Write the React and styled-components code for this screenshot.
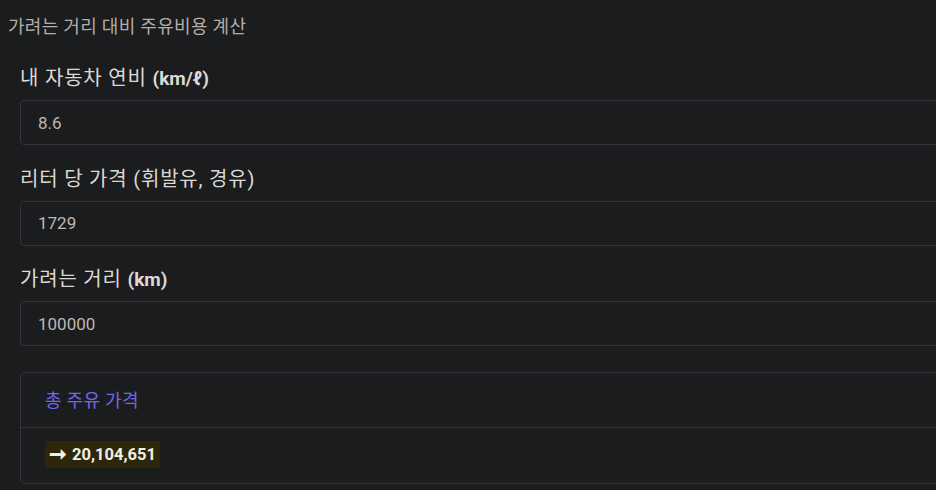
import React from "react";
import styled, { createGlobalStyle } from "styled-components";

const GlobalStyle = createGlobalStyle`
	html {
		background: #1b1c1e;
		overflow: hidden;
	}
	body {
		/* the form runs on past the right edge of the window */
		margin: 8px -200px 8px 8px;
		font-family: Roboto, "Noto Sans CJK KR", sans-serif;
		color: #d6d3cf;
	}
`;

const Title = styled.div`
	font-size: 18px;
	letter-spacing: 0.3px;
	line-height: 24px;
	padding-top: 7px;
	color: #b3ada6;
`;

const Form = styled.div`
	padding: 26px 0 0 12px;
`;

const Field = styled.div`
	display: flex;
	flex-direction: column;
	margin-bottom: 20.5px;
`;

const Label = styled.label`
	font-size: 19px;
	line-height: 27px;
	margin-bottom: 8px;
	color: #dcd9d5;

	b {
		font-weight: 700;
	}
`;

// korean glyphs render wider than the latin ones in this label
const Ko = styled.span`
	font-size: 20px;
	letter-spacing: 0.8px;
`;

const Input = styled.input`
	box-sizing: border-box;
	width: 100%;
	height: 45px;
	padding: 0 17px;
	background: #1b1c1e;
	border: 1px solid #343539;
	border-radius: 4px;
	font-family: Roboto, sans-serif;
	font-size: 17px;
	color: #bdb8b2;
	outline: none;
`;

const Card = styled.div`
	margin-top: 26px;
	border: 1px solid #343539;
	border-radius: 5px;
`;

const CardHeader = styled.div`
	box-sizing: border-box;
	height: 55px;
	display: flex;
	align-items: center;
	padding: 0 0 3px 24px;
	font-size: 18px;
	letter-spacing: 0.3px;
	color: #6f67e6;
	border-bottom: 1px solid #343539;
`;

const CardBody = styled.div`
	padding: 13px 24px 15px;
`;

const Result = styled.span`
	display: inline-flex;
	align-items: center;
	gap: 5px;
	height: 27px;
	padding: 0 4px;
	background: #2e2609;
	font-size: 16.5px;
	font-weight: 700;
	color: #f1efe9;
`;

const Arrow = styled.span`
	font-size: 21px;
	line-height: 1;
`;

const fields = [
	{ label: "내 자동차 연비 ", unit: "(km/ℓ)", value: "8.6" },
	{ label: "리터 당 가격 (휘발유, 경유)", unit: "", value: "1729" },
	{ label: "가려는 거리 ", unit: "(km)", value: "100000" },
];

export default function App() {
	const total = Math.round((100000 / 8.6) * 1729).toLocaleString("en-US");

	return (
		<>
			<GlobalStyle />
			<Title>가려는 거리 대비 주유비용 계산</Title>
			<Form>
				{fields.map((f) => (
					<Field key={f.value}>
						<Label>
							<Ko>{f.label}</Ko>
							{f.unit && <b>{f.unit}</b>}
						</Label>
						<Input defaultValue={f.value} />
					</Field>
				))}
				<Card>
					<CardHeader>총 주유 가격</CardHeader>
					<CardBody>
						<Result>
							<Arrow>➞</Arrow>
							{total}
						</Result>
					</CardBody>
				</Card>
			</Form>
		</>
	);
}
